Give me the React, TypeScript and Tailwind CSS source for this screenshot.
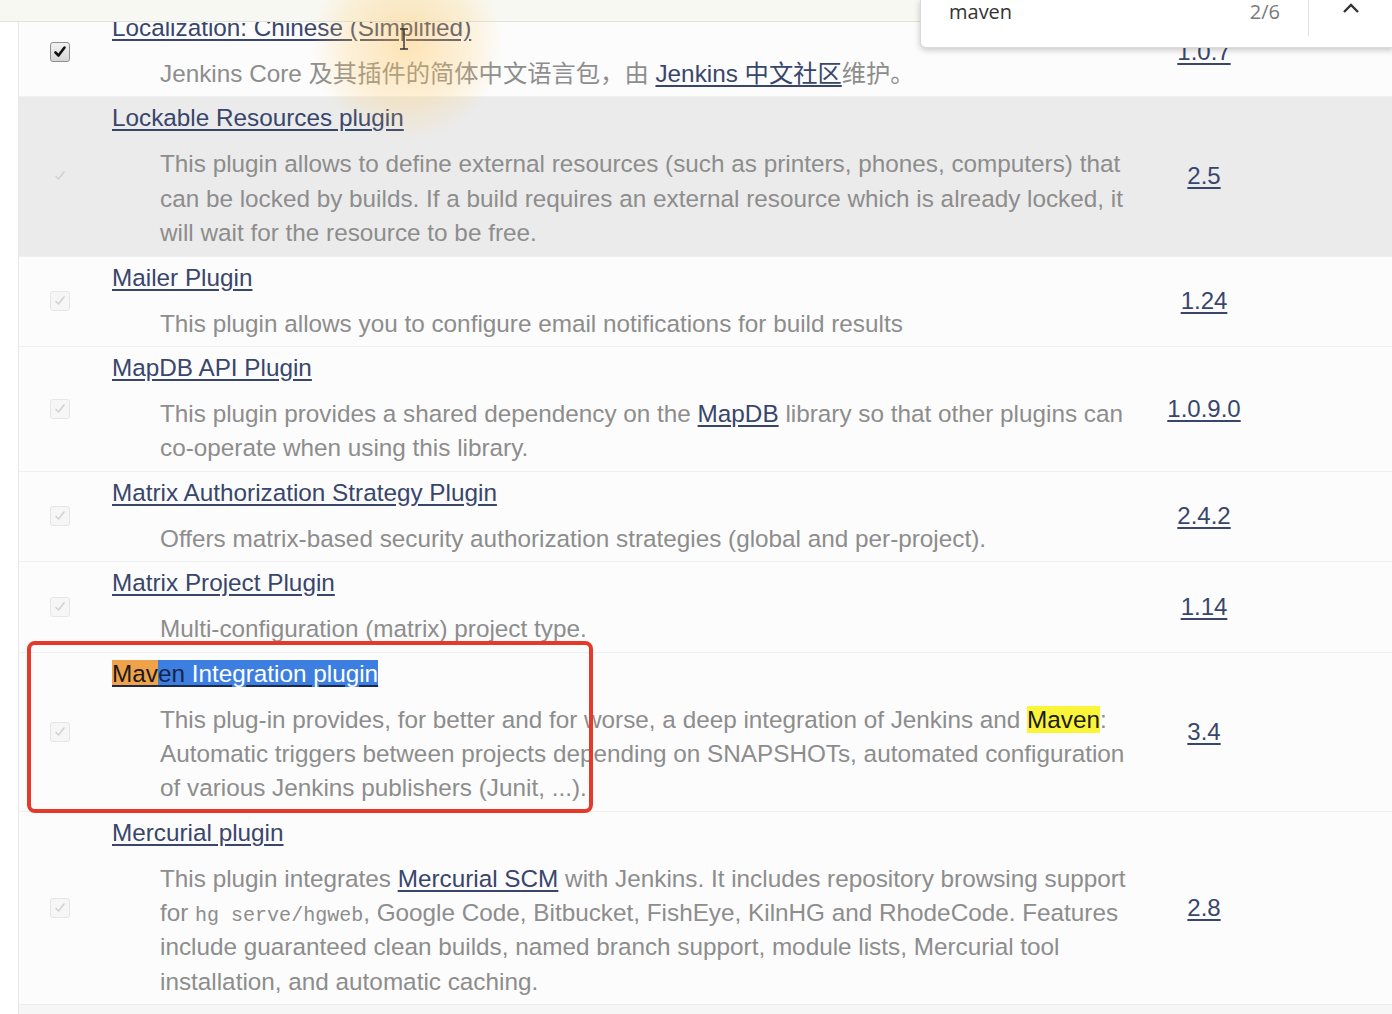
import React from "react";

type Plugin = {
  name: React.ReactNode;
  desc: React.ReactNode[];
  version: string;
  checked?: boolean;
  hover?: boolean;
};

const Link = ({ children }: { children: React.ReactNode }) => (
  <a className="text-[#39466c] underline decoration-[#39466c] underline-offset-[3px] cursor-pointer">{children}</a>
);

function Checkbox({ checked, onGray }: { checked?: boolean; onGray?: boolean }) {
  if (checked) {
    return (
      <div className="w-[20px] h-[20px] rounded-[3px] border border-[#8f8f8f] bg-gradient-to-b from-[#f2f2f2] to-[#d6d6d6] flex items-center justify-center">
        <svg width="14" height="14" viewBox="0 0 14 14">
          <path d="M2.5 7.5 L5.5 10.5 L11.5 2.5" stroke="#111" strokeWidth="2.6" fill="none" strokeLinecap="round" strokeLinejoin="round" />
        </svg>
      </div>
    );
  }
  return (
    <div
      className={`w-[20px] h-[20px] rounded-[3px] flex items-center justify-center ${
        onGray ? "" : "border border-[#e6e6e6] bg-[#f6f6f6]"
      }`}
    >
      <svg width="14" height="14" viewBox="0 0 14 14">
        <path d="M3 7.5 L5.5 10 L11 3" stroke="#d2d2d2" strokeWidth="1.6" fill="none" strokeLinecap="round" strokeLinejoin="round" />
      </svg>
    </div>
  );
}

const plugins: Plugin[] = [
  {
    name: <Link>Localization: Chinese (Simplified)</Link>,
    desc: [
      <>
        Jenkins Core 及其插件的简体中文语言包，由 <Link>Jenkins 中文社区</Link>维护。
      </>,
    ],
    version: "1.0.7",
    checked: true,
  },
  {
    name: <Link>Lockable Resources plugin</Link>,
    desc: [
      "This plugin allows to define external resources (such as printers, phones, computers) that",
      "can be locked by builds. If a build requires an external resource which is already locked, it",
      "will wait for the resource to be free.",
    ],
    version: "2.5",
    hover: true,
  },
  {
    name: <Link>Mailer Plugin</Link>,
    desc: ["This plugin allows you to configure email notifications for build results"],
    version: "1.24",
  },
  {
    name: <Link>MapDB API Plugin</Link>,
    desc: [
      <>
        This plugin provides a shared dependency on the <Link>MapDB</Link> library so that other plugins can
      </>,
      "co-operate when using this library.",
    ],
    version: "1.0.9.0",
  },
  {
    name: <Link>Matrix Authorization Strategy Plugin</Link>,
    desc: ["Offers matrix-based security authorization strategies (global and per-project)."],
    version: "2.4.2",
  },
  {
    name: <Link>Matrix Project Plugin</Link>,
    desc: ["Multi-configuration (matrix) project type."],
    version: "1.14",
  },
  {
    name: (
      <a className="underline underline-offset-[3px] decoration-[#1b2a4a]">
        <span className="bg-[#f0a24a] text-[#1b1b1b]">Mav</span>
        <span className="bg-[#3d7fe0] text-[#15244a]">en</span>
        <span className="bg-[#3d7fe0] text-white"> Integration plugin</span>
      </a>
    ),
    desc: [
      <>
        This plug-in provides, for better and for worse, a deep integration of Jenkins and{" "}
        <span className="bg-[#fbf53a] text-[#1b1b1b]">Maven</span>:
      </>,
      "Automatic triggers between projects depending on SNAPSHOTs, automated configuration",
      "of various Jenkins publishers (Junit, ...).",
    ],
    version: "3.4",
  },
  {
    name: <Link>Mercurial plugin</Link>,
    desc: [
      <>
        This plugin integrates <Link>Mercurial SCM</Link> with Jenkins. It includes repository browsing support
      </>,
      <>
        for <code className="font-['Liberation_Mono',monospace] text-[20px] leading-none">hg serve/hgweb</code>, Google
        Code, Bitbucket, FishEye, KilnHG and RhodeCode. Features
      </>,
      "include guaranteed clean builds, named branch support, module lists, Mercurial tool",
      "installation, and automatic caching.",
    ],
    version: "2.8",
  },
];

function Row({ p }: { p: Plugin }) {
  return (
    <div className={`flex border-t border-[#f0f0f0] ${p.hover ? "bg-[#ebebeb]" : "bg-[#fcfcfc]"}`}>
      <div className="w-[82px] shrink-0 flex items-center justify-center">
        <Checkbox checked={p.checked} onGray={p.hover} />
      </div>
      <div className="w-[1045px] shrink-0 pl-[11px] pt-[4px] pb-[5px]">
        <div className="text-[24.3px] leading-[34px] whitespace-nowrap">{p.name}</div>
        <div className="mt-3 pl-12 text-[24.3px] leading-[34.4px] text-[#8d8d8d]">
          {p.desc.map((line, i) => (
            <div key={i} className="h-[34.4px] whitespace-nowrap">
              {line}
            </div>
          ))}
        </div>
      </div>
      <div className="w-[116px] shrink-0 flex items-center justify-center text-[24px] leading-[34px]">
        <Link>{p.version}</Link>
      </div>
      <div className="flex-1" />
    </div>
  );
}

export default function App() {
  return (
    <div className="relative w-[1392px] h-[1014px] overflow-hidden bg-white font-['Liberation_Sans','Noto_Sans_CJK_SC',sans-serif]">
      <div className="ml-[18px] mt-[6px] border-l border-[#e8e8e8] flex flex-col">
        {plugins.map((p, i) => (
          <Row key={i} p={p} />
        ))}
        <div className="h-[40px] bg-[#f6f6f6] border-t border-[#ececec]" />
      </div>

      {/* browser toolbar edge */}
      <div className="absolute top-0 left-0 right-0 h-[22px] bg-[#f8f8f3] border-b border-[#e2e2dc]" />

      {/* cursor highlight from screen recording */}
      <div className="absolute left-[312px] top-[-56px] w-[190px] h-[200px] rounded-full bg-[radial-gradient(circle,rgba(255,194,85,0.42)_0%,rgba(255,205,110,0.24)_45%,rgba(255,210,120,0)_70%)] pointer-events-none" />
      <svg className="absolute left-[398px] top-[28px]" width="12" height="22" viewBox="0 0 12 22">
        <path d="M2 1 H10 M6 1 V21 M2 21 H10" stroke="#333" strokeWidth="1.4" fill="none" />
      </svg>

      {/* find bar */}
      <div className="absolute left-[920px] top-0 w-[474px] h-[48px] bg-white border border-t-0 border-[#dadada] rounded-bl-[6px] shadow-[0_2px_6px_rgba(0,0,0,0.22)] flex items-start font-['Open_Sans',sans-serif]">
        <div className="flex-1 pl-[28px] pt-[1px] text-[20px] leading-[22px] text-[#333]">maven</div>
        <div className="pr-[28px] pt-[1px] text-[20px] leading-[22px] text-[#7a7a7a]">2/6</div>
        <div className="w-px h-[36px] bg-[#e0e0e0]" />
        <div className="w-[84px] flex justify-center pt-[2px]">
          <svg width="20" height="12" viewBox="0 0 20 12">
            <path d="M3 10 L10 3 L17 10" stroke="#333" strokeWidth="2.4" fill="none" />
          </svg>
        </div>
      </div>

      {/* red annotation box */}
      <div className="absolute left-[27px] top-[641px] w-[566px] h-[172px] border-4 border-[#e53a2a] rounded-[8px] pointer-events-none" />
    </div>
  );
}
